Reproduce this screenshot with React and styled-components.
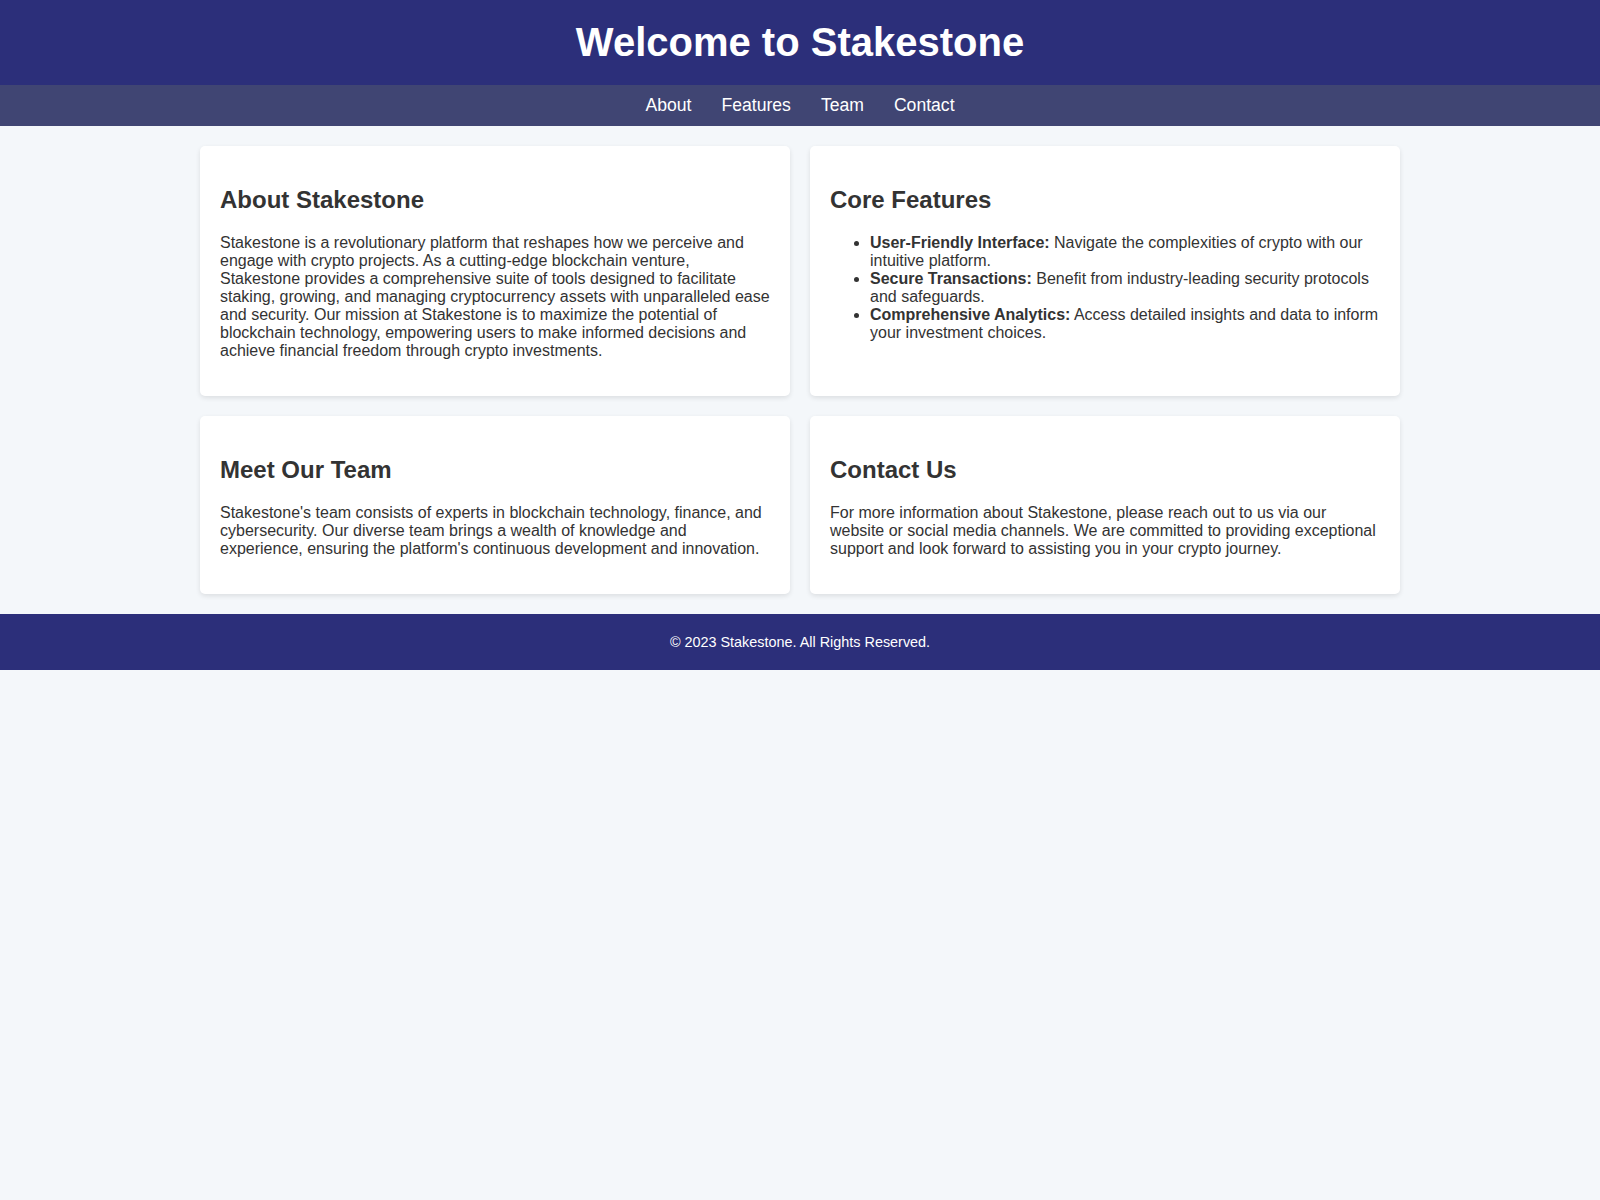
import React from 'react';
import styled, { createGlobalStyle } from 'styled-components';

const GlobalStyle = createGlobalStyle`
  body {
    margin: 0;
    font-family: "Liberation Sans", Arial, sans-serif;
    background: #f4f7fa;
    color: #333;
  }
`;

const Header = styled.header`
  background: #2c2f7a;
  color: #fff;
  text-align: center;
  padding: 20px 0;
  h1 {
    margin: 0;
    font-size: 40px;
  }
`;

const Nav = styled.nav`
  background: #404573;
  display: flex;
  justify-content: center;
  padding: 10px 0;
  a {
    color: #fff;
    text-decoration: none;
    font-size: 17.6px;
    margin: 0 15px;
  }
`;

const Container = styled.main`
  width: 1200px;
  margin: 20px auto;
  display: grid;
  grid-template-columns: 1fr 1fr;
  gap: 20px;
`;

const Card = styled.section`
  background: #fff;
  border-radius: 5px;
  box-shadow: 0 2px 5px rgba(0, 0, 0, 0.1);
  padding: 20px;
  h2 {
    font-size: 24px;
    margin: 20px 0;
  }
  p,
  ul {
    font-size: 16px;
    margin: 0 0 16px;
  }
  ul {
    padding-left: 40px;
  }
`;

const Footer = styled.footer`
  background: #2c2f7a;
  color: #fff;
  text-align: center;
  padding: 20px 0;
  font-size: 14.4px;
`;

const features = [
  ['User-Friendly Interface:', 'Navigate the complexities of crypto with our intuitive platform.'],
  ['Secure Transactions:', 'Benefit from industry-leading security protocols and safeguards.'],
  ['Comprehensive Analytics:', 'Access detailed insights and data to inform your investment choices.'],
];

export default function App() {
  return (
    <>
      <GlobalStyle />
      <Header>
        <h1>Welcome to Stakestone</h1>
      </Header>
      <Nav>
        <a href="#about">About</a>
        <a href="#features">Features</a>
        <a href="#team">Team</a>
        <a href="#contact">Contact</a>
      </Nav>
      <Container>
        <Card id="about">
          <h2>About Stakestone</h2>
          <p>
            Stakestone is a revolutionary platform that reshapes how we perceive and engage with crypto
            projects. As a cutting-edge blockchain venture, Stakestone provides a comprehensive suite of
            tools designed to facilitate staking, growing, and managing cryptocurrency assets with
            unparalleled ease and security. Our mission at Stakestone is to maximize the potential of
            blockchain technology, empowering users to make informed decisions and achieve financial
            freedom through crypto investments.
          </p>
        </Card>
        <Card id="features">
          <h2>Core Features</h2>
          <ul>
            {features.map(([title, text]) => (
              <li key={title}>
                <strong>{title}</strong> {text}
              </li>
            ))}
          </ul>
        </Card>
        <Card id="team">
          <h2>Meet Our Team</h2>
          <p>
            Stakestone's team consists of experts in blockchain technology, finance, and cybersecurity.
            Our diverse team brings a wealth of knowledge and experience, ensuring the platform's
            continuous development and innovation.
          </p>
        </Card>
        <Card id="contact">
          <h2>Contact Us</h2>
          <p>
            For more information about Stakestone, please reach out to us via our website or social media
            channels. We are committed to providing exceptional support and look forward to assisting you
            in your crypto journey.
          </p>
        </Card>
      </Container>
      <Footer>© 2023 Stakestone. All Rights Reserved.</Footer>
    </>
  );
}
